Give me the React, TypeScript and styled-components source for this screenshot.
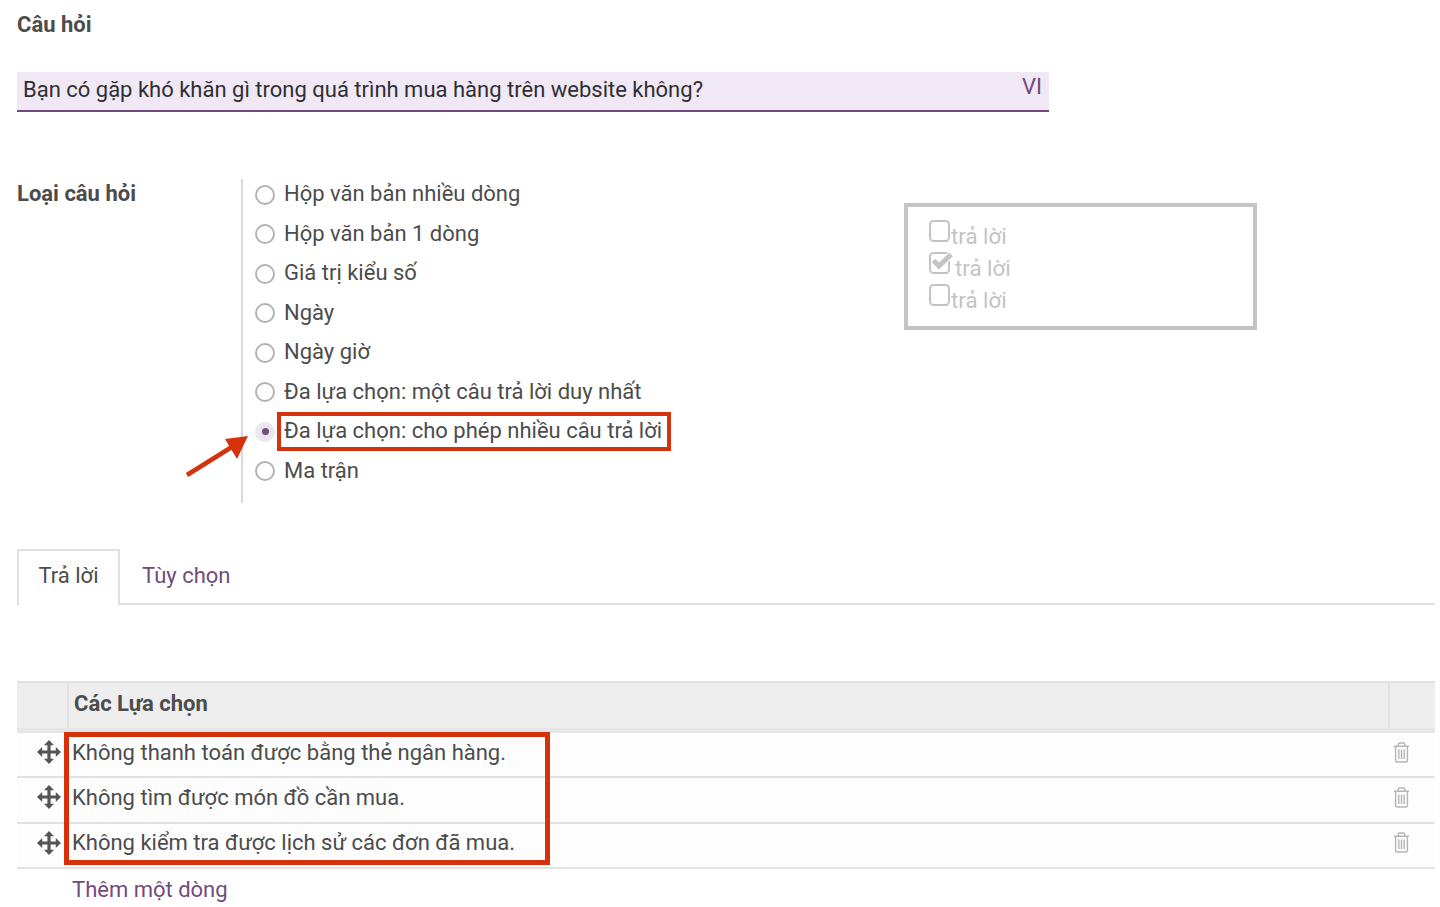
import React from "react";
import styled, { createGlobalStyle } from "styled-components";

const GlobalStyle = createGlobalStyle`
  html, body {
    margin: 0;
    background: #fff;
  }
  body {
    font-family: Roboto, "Noto Sans", sans-serif;
    font-size: 22px;
    color: #4c4c4c;
    overflow: hidden;
  }
`;

const Page = styled.div`
  position: relative;
  height: 907px;
  padding: 0 5px 0 17px;
  box-sizing: border-box;
  overflow: hidden;
`;

const FieldLabel = styled.div`
  font-weight: 700;
  line-height: 26px;
  color: #4c4c4c;
`;

const QuestionLabel = styled(FieldLabel)`
  padding-top: 12px;
`;

const QuestionInput = styled.div`
  display: flex;
  justify-content: space-between;
  box-sizing: border-box;
  width: 1032px;
  height: 40px;
  margin-top: 34px;
  padding: 0 7px 0 6px;
  background: #f1e8f5;
  border-bottom: 2px solid #714b7d;
  color: #2f2f33;
  line-height: 36px;
`;

const LangTag = styled.span`
  color: #714b7d;
  line-height: 29px;
`;

const TypeSection = styled.div`
  display: flex;
  margin-top: 67px;
  height: 324px;
`;

const TypeLabel = styled(FieldLabel)`
  width: 224px;
  padding-top: 2px;
`;

const RadioList = styled.div`
  box-sizing: border-box;
  width: 661px;
  padding-left: 12px;
  border-left: 2px solid #d9d9d9;
  display: flex;
  flex-direction: column;
  gap: 10.5px;
`;

const RadioRow = styled.label`
  display: flex;
  align-items: center;
  height: 29px;
  gap: 9px;
  color: #4c4c4c;
`;

const RadioDot = styled.span<{ $checked?: boolean }>`
  position: relative;
  top: 1px;
  flex: none;
  box-sizing: border-box;
  width: 20px;
  height: 20px;
  border-radius: 50%;
  border: ${(p) => (p.$checked ? "none" : "2px solid #b3b3b3")};
  background: ${(p) => (p.$checked ? "#ece7ef" : "#fff")};

  &::after {
    content: "";
    display: ${(p) => (p.$checked ? "block" : "none")};
    position: absolute;
    top: 6.5px;
    left: 6.5px;
    width: 7px;
    height: 7px;
    border-radius: 50%;
    background: #714b7d;
  }
`;

const Highlighted = styled.span`
  position: relative;

  &::before {
    content: "";
    position: absolute;
    top: -6px;
    bottom: -8px;
    left: -7px;
    right: -9px;
    border: 4px solid #d5310b;
  }
`;

const PreviewCard = styled.div`
  box-sizing: border-box;
  align-self: flex-start;
  width: 353px;
  height: 127px;
  margin: 24px 0 0 2px;
  padding: 13px 0 0 21px;
  border: 4px solid #c4c4c4;
  color: #c4c4c4;
  font-size: 22.3px;
  line-height: 32px;
`;

const PreviewRow = styled.div`
  display: flex;
  align-items: flex-start;
  height: 32px;
`;

const PreviewText = styled.span<{ $checked?: boolean }>`
  margin-left: ${(p) => (p.$checked ? "4px" : "0")};
`;

const BoxIcon = styled.svg`
  flex: none;
  width: 22px;
  height: 23px;
  overflow: visible;
`;

const TabBar = styled.div`
  display: flex;
  margin-top: 46px;
  height: 56px;
  border-bottom: 2px solid #e0e0e0;
  box-sizing: border-box;
`;

const Tab = styled.div<{ $active?: boolean }>`
  box-sizing: border-box;
  height: 56px;
  padding: ${(p) => (p.$active ? "0 19.5px" : "2px 22px 0")};
  line-height: 49px;
  color: ${(p) => (p.$active ? "#4c4c4c" : "#714b7d")};
  background: ${(p) => (p.$active ? "#fff" : "transparent")};
  border: ${(p) => (p.$active ? "2px solid #e0e0e0" : "none")};
  border-bottom: none;
`;

const Table = styled.div`
  position: relative;
  margin-top: 76px;
`;

const HeaderRow = styled.div`
  display: grid;
  grid-template-columns: 50px 1fr 47px;
  height: 52px;
  box-sizing: border-box;
  background: #eeeeee;
  border-top: 2px solid #e2e2e2;
  border-bottom: 5px solid #e6e6e6;
`;

const HeaderCell = styled.div<{ $divided?: boolean }>`
  padding-left: 5px;
  font-weight: 700;
  line-height: 41px;
  border-left: ${(p) => (p.$divided ? "2px solid #e2e2e2" : "none")};
`;

const Row = styled.div`
  display: grid;
  grid-template-columns: 55px 1fr 68px;
  align-items: center;
  box-sizing: border-box;
  height: 45.3px;
  padding-bottom: 5px;
  background: #fdfdfd;
  border-bottom: 2px solid #e2e2e2;
`;

const DragCell = styled.div`
  display: flex;
  justify-content: flex-end;
  padding-right: 11px;
  color: #555;
`;

const DragIcon = styled.svg`
  width: 24px;
  height: 24px;
  fill: currentColor;
`;

const RowText = styled.div`
  color: #4c4c4c;
`;

const TrashCell = styled.div`
  display: flex;
  justify-content: center;
  color: #b5b5b5;
`;

const TrashIcon = styled.svg`
  width: 17px;
  height: 21px;
  fill: none;
  stroke: currentColor;
  stroke-width: 1.4;
`;

const ChoicesHighlight = styled.div`
  position: absolute;
  top: 51px;
  left: 47px;
  width: 486px;
  height: 133px;
  box-sizing: border-box;
  border: 5px solid #d5310b;
  pointer-events: none;
`;

const AddLine = styled.div`
  padding: 7px 0 0 55px;
  line-height: 28px;
  color: #714b7d;
`;

const PointerArrow = styled.svg`
  position: absolute;
  left: 180px;
  top: 430px;
  width: 75px;
  height: 52px;
`;

const questionTypes = [
  "Hộp văn bản nhiều dòng",
  "Hộp văn bản 1 dòng",
  "Giá trị kiểu số",
  "Ngày",
  "Ngày giờ",
  "Đa lựa chọn: một câu trả lời duy nhất",
  "Đa lựa chọn: cho phép nhiều câu trả lời",
  "Ma trận",
];

const choices = [
  "Không thanh toán được bằng thẻ ngân hàng.",
  "Không tìm được món đồ cần mua.",
  "Không kiểm tra được lịch sử các đơn đã mua.",
];

const CheckBox: React.FC<{ checked?: boolean }> = ({ checked }) => (
  <BoxIcon viewBox="0 0 22 23">
    <rect x="1" y="1" width="19" height="20" rx="3.5" fill="none" stroke="#c4c4c4" strokeWidth="2" />
    {checked && (
      <>
        <path d="M4.5 8.5l5.5 5.5L22 2.5" fill="none" stroke="#fff" strokeWidth="7" />
        <path d="M4.5 8.5l5.5 5.5L22 2.5" fill="none" stroke="#c4c4c4" strokeWidth="5" />
      </>
    )}
  </BoxIcon>
);

const MoveGlyph: React.FC = () => (
  <DragIcon viewBox="0 0 24 24">
    <path d="M12 0l5 5.2h-3.4v5.2h5.2V7L24 12l-5.2 5v-3.4h-5.2v5.2H17L12 24l-5-5.2h3.4v-5.2H5.2V17L0 12l5.2-5v3.4h5.2V5.2H7z" />
  </DragIcon>
);

const TrashGlyph: React.FC = () => (
  <TrashIcon viewBox="0 0 17 21">
    <path d="M1 4.2h15M5.3 4V2.2c0-.8.5-1.2 1.2-1.2h4c.7 0 1.2.4 1.2 1.2V4" />
    <path d="M2.6 4.4v14c0 1 .6 1.6 1.5 1.6h8.8c.9 0 1.5-.6 1.5-1.6v-14" />
    <path d="M5.8 7.5v9.5M8.5 7.5v9.5M11.2 7.5v9.5" />
  </TrashIcon>
);

const App: React.FC = () => (
  <>
    <GlobalStyle />
    <Page>
      <QuestionLabel>Câu hỏi</QuestionLabel>
      <QuestionInput>
        <span>Bạn có gặp khó khăn gì trong quá trình mua hàng trên website không?</span>
        <LangTag>VI</LangTag>
      </QuestionInput>

      <TypeSection>
        <TypeLabel>Loại câu hỏi</TypeLabel>
        <RadioList>
          {questionTypes.map((label, i) => (
            <RadioRow key={label}>
              <RadioDot $checked={i === 6} />
              {i === 6 ? <Highlighted>{label}</Highlighted> : <span>{label}</span>}
            </RadioRow>
          ))}
        </RadioList>
        <PreviewCard>
          <PreviewRow>
            <CheckBox />
            <PreviewText>trả lời</PreviewText>
          </PreviewRow>
          <PreviewRow>
            <CheckBox checked />
            <PreviewText $checked>trả lời</PreviewText>
          </PreviewRow>
          <PreviewRow>
            <CheckBox />
            <PreviewText>trả lời</PreviewText>
          </PreviewRow>
        </PreviewCard>
      </TypeSection>

      <TabBar>
        <Tab $active>Trả lời</Tab>
        <Tab>Tùy chọn</Tab>
      </TabBar>

      <Table>
        <HeaderRow>
          <HeaderCell />
          <HeaderCell $divided>Các Lựa chọn</HeaderCell>
          <HeaderCell $divided />
        </HeaderRow>
        {choices.map((choice) => (
          <Row key={choice}>
            <DragCell>
              <MoveGlyph />
            </DragCell>
            <RowText>{choice}</RowText>
            <TrashCell>
              <TrashGlyph />
            </TrashCell>
          </Row>
        ))}
        <AddLine>Thêm một dòng</AddLine>
        <ChoicesHighlight />
      </Table>

      <PointerArrow viewBox="0 0 75 52">
        <path d="M7 45L55 15" stroke="#d5310b" strokeWidth="4.5" fill="none" />
        <path d="M68 6L45 9l12 20z" fill="#d5310b" />
      </PointerArrow>
    </Page>
  </>
);

export default App;
